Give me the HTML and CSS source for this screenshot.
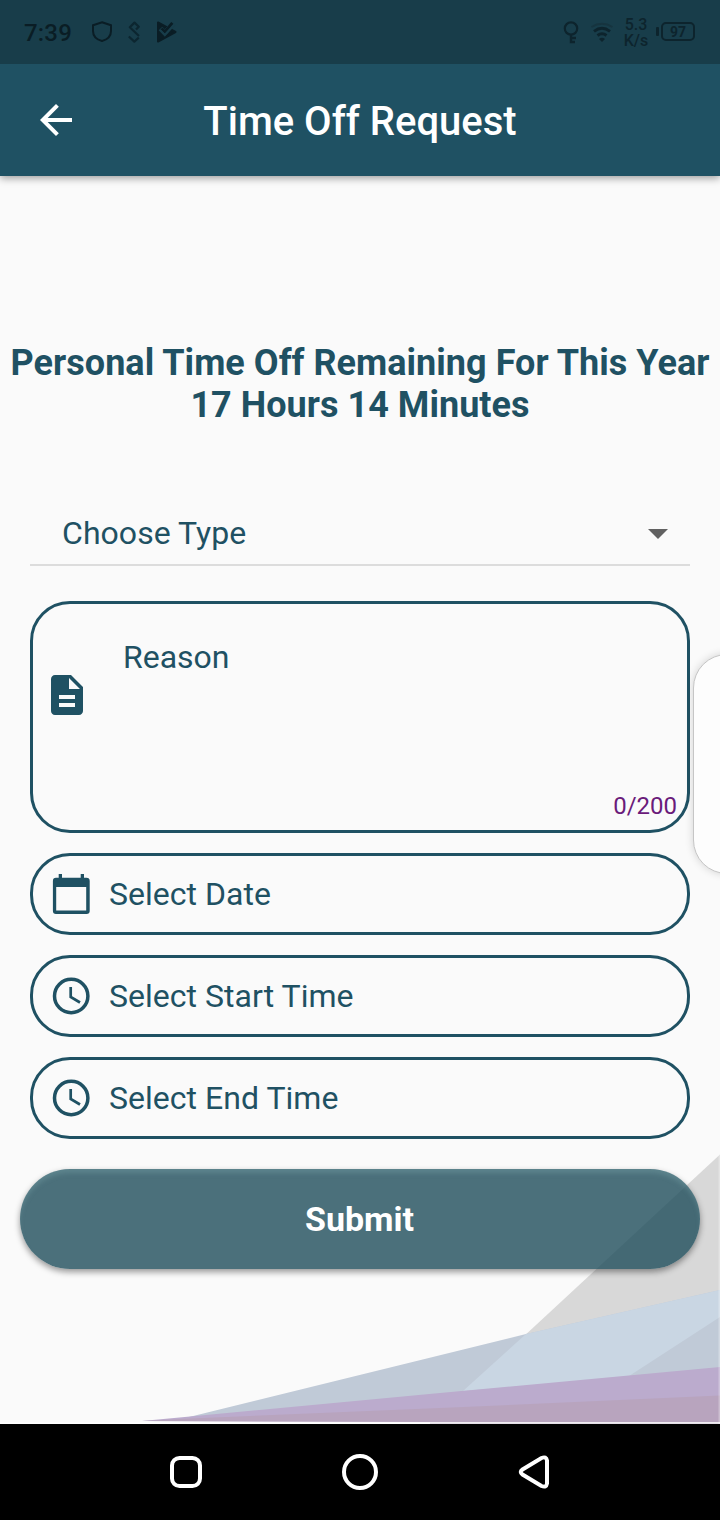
FILE: index.html
```html
<!DOCTYPE html>
<html lang="en">
<head>
<meta charset="utf-8">
<title>Time Off Request</title>
<link rel="stylesheet" href="styles.css">
</head>
<body>
<div class="status">
  <span class="time">7:39</span>
  <svg class="status-left" width="90" height="30" viewBox="90 17 90 30" fill="none" stroke="#0a1d25" stroke-width="2">
    <path d="M102 22.200 L111 25.300 V31 C111 36 107.500 39.500 102 41 C96.500 39.500 93 36 93 31 V25.300 Z"/>
    <path stroke="#0c2630" stroke-width="2.200" stroke-linejoin="round" d="M136 29.500 L138.800 26.700 L134.500 22.600 L129.800 27.300 L139 36 M128.800 36.500 L134.300 41.600 L138.800 37.600"/>
    <path d="M158 22.500 L175.500 32 L158 41.500 Z" fill="#0a1d25" stroke-linejoin="round"/>
    <path d="M160.500 28.500 L164.800 33 L173.800 23" stroke="#183d4a" stroke-width="5"/>
    <path d="M161.500 28.500 L164.800 31.800 L172.300 22.800" stroke-width="2.800"/>
    <path d="M160.500 30.300 L164.800 34.500 L174.500 24.500" stroke="#183d4a" stroke-width="1.600"/>
  </svg>
  <svg class="status-right" width="54" height="30" viewBox="560 17 54 30" fill="none" stroke="#0d242d" stroke-width="2">
    <circle cx="571" cy="28.500" r="6.200" stroke-width="2.200"/>
    <path stroke-width="2.400" d="M571 35 V43.300 M571 38 H576 M571 42 H575"/>
    <path d="M591.500 27 Q602 20.500 612.500 27" stroke="#16343f"/>
    <path d="M594 31.300 Q602 25.300 610 31.300 M597.500 35.500 Q602 32 606.500 35.500" stroke-width="2.900"/>
    <path d="M599 39 Q602 36.500 605 39 L602 42 Z" fill="#0d242d" stroke="none"/>
  </svg>
  <span class="speed">5.3<br>K/s</span>
  <span class="battery-tip"></span>
  <span class="battery">97</span>
</div>
<header class="appbar">
  <svg class="back" width="32" height="32" viewBox="4 4 16 16" fill="#fff"><path d="M20 11H7.830l5.590-5.590L12 4l-8 8 8 8 1.410-1.410L7.830 13H20v-2z"/></svg>
  <h1>Time Off Request</h1>
</header>
<main class="content">
  <svg class="art" width="720" height="280" viewBox="0 1144 720 280">
    <path fill="#d8d8d8" d="M720 1154.500 L522 1338 L720 1338Z"/>
    <path fill="#c0cad7" d="M185 1418 L526 1334 L720 1290 V1400Z"/>
    <path fill="#c9d6e3" d="M526 1334 L463 1391 L626 1378 L720 1317 V1290Z"/>
    <path fill="#bbabcd" d="M142 1421 L190 1416.500 L440 1393 L720 1367 V1422Z"/>
    <path fill="#b8a4be" d="M142 1421 L190 1418.500 L440 1408 L720 1395.500 V1422H430Z"/>
    <path fill="#e4dde6" d="M430 1422.500H720V1424H430Z"/>
    <path fill="#fff" d="M0 1422.500H430V1424H0Z"/>
    <path fill="#fff" opacity=".3" d="M718.500 1155H720V1424H718.500Z"/>
  </svg>
  <h2>Personal Time Off Remaining For This Year<br>17 Hours 14 Minutes</h2>
  <div class="select">
    <span>Choose Type</span>
    <svg width="20" height="10" viewBox="0 0 20 10"><path fill="#616161" d="M0 0H20L10 10Z"/></svg>
  </div>
  <div class="reason">
    <svg class="doc" width="32" height="40" viewBox="4 2 16 20" fill="#1f5163"><path d="M14 2H6c-1.100 0-1.990.9-1.990 2L4 20c0 1.100.89 2 1.990 2H18c1.100 0 2-.9 2-2V8l-6-6zm2 16H8v-2h8v2zm0-4H8v-2h8v2zm-3-5V3.500L18.500 9H13z"/></svg>
    <span class="reason-label">Reason</span>
    <span class="count">0/200</span>
  </div>
  <div class="field">
    <svg width="48" height="48" viewBox="0 0 48 48" fill="#1f5163"><path fill-rule="evenodd" d="M9 7.700H11.700V4H15V7.700H33.700V4H37V7.700H39.500Q42.700 7.700 42.700 11V41Q42.700 44 39.500 44H9Q5.900 44 5.900 41V11Q5.900 7.700 9 7.700ZM9.200 17V40.600H39.200V17Z"/></svg>
    <span>Select Date</span>
  </div>
  <div class="field">
    <svg width="48" height="48" viewBox="0 0 48 48" fill="none" stroke="#1f5163"><circle cx="24.200" cy="24" r="16.700" stroke-width="3.500"/><path d="M23.700 15V25L33 30.500" stroke-width="2.700"/></svg>
    <span>Select Start Time</span>
  </div>
  <div class="field">
    <svg width="48" height="48" viewBox="0 0 48 48" fill="none" stroke="#1f5163"><circle cx="24.200" cy="24" r="16.700" stroke-width="3.500"/><path d="M23.700 15V25L33 30.500" stroke-width="2.700"/></svg>
    <span>Select End Time</span>
  </div>
  <button class="submit">Submit</button>
  <div class="edge-panel"></div>
</main>
<nav class="navbar">
  <svg width="40" height="40" viewBox="0 0 40 40"><rect x="6" y="6" width="28" height="28" rx="7.500"/></svg>
  <svg width="40" height="40" viewBox="0 0 40 40"><circle cx="20" cy="20" r="16"/></svg>
  <svg width="40" height="40" viewBox="0 0 40 40"><path d="M8.500 17.500 L27.500 6 Q32.300 4 33 8.500 V31.500 Q32.300 36 27.500 34 L8.500 22.500 Q5 20 8.500 17.500Z"/></svg>
</nav>
</body>
</html>
```
FILE: styles.css
```css
* { box-sizing: border-box; }
body {
  margin: 0;
  width: 720px;
  height: 1520px;
  overflow: hidden;
  display: flex;
  flex-direction: column;
  background: #fafafa;
  color: #1f5163;
  font-family: Roboto, sans-serif;
}
svg { display: block; flex: none; }
.status {
  position: relative;
  z-index: 2;
  height: 64px;
  flex: none;
  display: flex;
  align-items: center;
  padding: 0 25px 0 24px;
  background: #183d4a;
  color: #0a1d25;
}
.time { width: 66px; font-size: 24px; font-weight: 500; letter-spacing: .2px; padding-top: 2px; }
.status-right { margin-left: auto; }
.speed {
  width: 42px;
  padding: 2px 0 0 2px;
  text-align: center;
  font-size: 16px;
  font-weight: 500;
  line-height: 16px;
  color: #0d242d;
}
.battery-tip { width: 3px; height: 9px; border-radius: 1px; background: #0d242d; margin: 0 2px 1px 0; }
.battery {
  width: 34px;
  height: 19px;
  margin-bottom: 1px;
  border: 2px solid #0d242d;
  border-radius: 5px;
  text-align: center;
  font-size: 14px;
  font-weight: 700;
  line-height: 16px;
  color: #0d242d;
}
.appbar {
  height: 112px;
  flex: none;
  display: grid;
  grid-template-columns: 80px 1fr 80px;
  align-items: center;
  background: #1f5163;
  color: #fff;
  box-shadow: 0 2px 8px rgba(0, 0, 0, .4);
  z-index: 1;
}
.back { margin-left: 40px; }
h1 { margin: 4px 0 0; text-align: center; font-size: 40px; line-height: 48px; font-weight: 500; }
.content {
  position: relative;
  height: 1248px;
  flex: none;
  display: flex;
  flex-direction: column;
  padding: 166px 30px 0;
  overflow: hidden;
}
.art { position: absolute; left: 0; bottom: 0; }
h2 {
  margin: 0 -30px;
  text-align: center;
  white-space: nowrap;
  font-size: 36px;
  line-height: 42px;
  font-weight: 700;
  letter-spacing: .03px;
}
.select {
  height: 64px;
  margin-top: 76px;
  display: flex;
  align-items: center;
  justify-content: space-between;
  padding: 0 22px 0 32px;
  border-bottom: 2px solid #dcdcdc;
  font-size: 32px;
  letter-spacing: .05px;
}
.select svg { margin-top: 2px; }
.reason {
  height: 232px;
  margin-top: 35px;
  display: grid;
  grid-template-columns: 72px 1fr auto;
  padding: 0 10px 0 18px;
  border: 3px solid #1f5163;
  border-radius: 40px;
}
.doc { margin-top: 71px; }
.reason-label { margin-top: 34px; font-size: 32px; line-height: 38px; }
.count { align-self: end; margin-bottom: 10px; font-size: 24px; line-height: 28px; color: #6a1b7a; }
.field {
  height: 82px;
  margin-top: 20px;
  display: flex;
  align-items: center;
  gap: 14px;
  padding-left: 14px;
  border: 3px solid #1f5163;
  border-radius: 40px;
  font-size: 32px;
  letter-spacing: .03px;
}
.submit {
  position: relative;
  height: 100px;
  margin: 30px -10px 0;
  padding: 0 7px 0 6px;
  border: 0;
  border-radius: 50px;
  background: rgba(31, 77, 91, .8);
  box-shadow: 0 3px 6px rgba(0, 0, 0, .4), inset 0 5px 5px -1px rgba(125, 170, 175, .35);
  color: #fff;
  font: 700 34px Roboto, sans-serif;
}
.edge-panel {
  position: absolute;
  right: -43px;
  top: 478px;
  width: 70px;
  height: 220px;
  border: 1px solid #c6c6c6;
  border-radius: 34px;
  background: #fdfdfd;
  box-shadow: 0 0 8px rgba(0, 0, 0, .16);
}
.navbar {
  height: 96px;
  flex: none;
  display: flex;
  justify-content: space-between;
  align-items: center;
  padding: 0 166px;
  background: #000;
}
.navbar svg { fill: none; stroke: #fff; stroke-width: 4; }
```
